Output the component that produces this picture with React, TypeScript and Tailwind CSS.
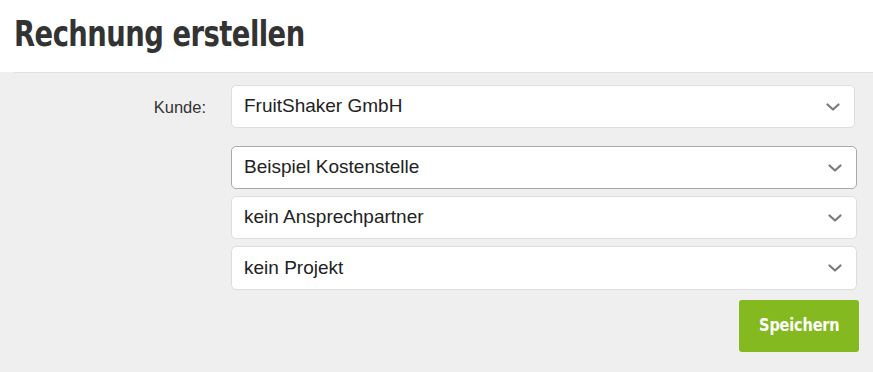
import React from "react";

function Chevron() {
  return (
    <svg width="14" height="8" viewBox="0 0 14 8" className="shrink-0">
      <path d="M1.5 1.5 L7 6.5 L12.5 1.5" fill="none" stroke="#7a7a7a" strokeWidth="2.2" strokeLinecap="round" strokeLinejoin="round" />
    </svg>
  );
}

function Select({ value, focused, h = "h-[43px]", extra = "" }: { value: string; focused?: boolean; h?: string; extra?: string }) {
  return (
    <div
      className={`${h} ${extra} flex items-center justify-between rounded-[5px] bg-white pl-[12px] pr-[14px] border ${
        focused ? "border-[#a9a9a9]" : "border-[#dedede]"
      }`}
    >
      <span className="text-[19px] text-[#222]">{value}</span>
      <Chevron />
    </div>
  );
}

export default function App() {
  return (
    <div className="w-[873px] h-[372px] bg-white overflow-hidden flex flex-col" style={{ fontFamily: '"Liberation Sans", Arial, sans-serif' }}>
      <div className="h-[72px] bg-white pl-[14px] pt-[11px]">
        <h1
          className="text-[35px] leading-[46px] font-bold text-[#333] tracking-[-0.6px] origin-left scale-x-[0.87] whitespace-nowrap"
          style={{ fontFamily: '"DejaVu Sans Condensed", sans-serif' }}
        >
          Rechnung erstellen
        </h1>
      </div>
      <div className="flex-1 bg-[#efefef] flex flex-col">
        <div className="ml-[14px] h-px bg-[#e2e2e2]" />
        <div className="flex pt-[12px] pr-[16px]">
          <div className="w-[207px] shrink-0 pr-[1px] text-right">
            <div className="h-[43px] flex items-center justify-end pt-[1px] text-[16.5px] text-[#333]">Kunde:</div>
          </div>
          <div className="ml-[24px] flex-1 flex flex-col">
            <Select value="FruitShaker GmbH" extra="mr-[2px]" />
            <div className="mt-[18px]">
              <Select value="Beispiel Kostenstelle" focused />
            </div>
            <div className="mt-[7px]">
              <Select value="kein Ansprechpartner" />
            </div>
            <div className="mt-[7px]">
              <Select value="kein Projekt" h="h-[44px]" />
            </div>
            <div className="mt-[10px] flex justify-end">
              <button className="w-[120px] h-[52px] mr-[-2px] rounded-[3px] bg-[#84b91f] text-white flex items-center justify-center">
                <span
                  className="text-[17px] font-bold tracking-[-0.2px] scale-x-[0.95] whitespace-nowrap"
                  style={{ fontFamily: '"DejaVu Sans Condensed", sans-serif' }}
                >
                  Speichern
                </span>
              </button>
            </div>
          </div>
        </div>
      </div>
    </div>
  );
}
